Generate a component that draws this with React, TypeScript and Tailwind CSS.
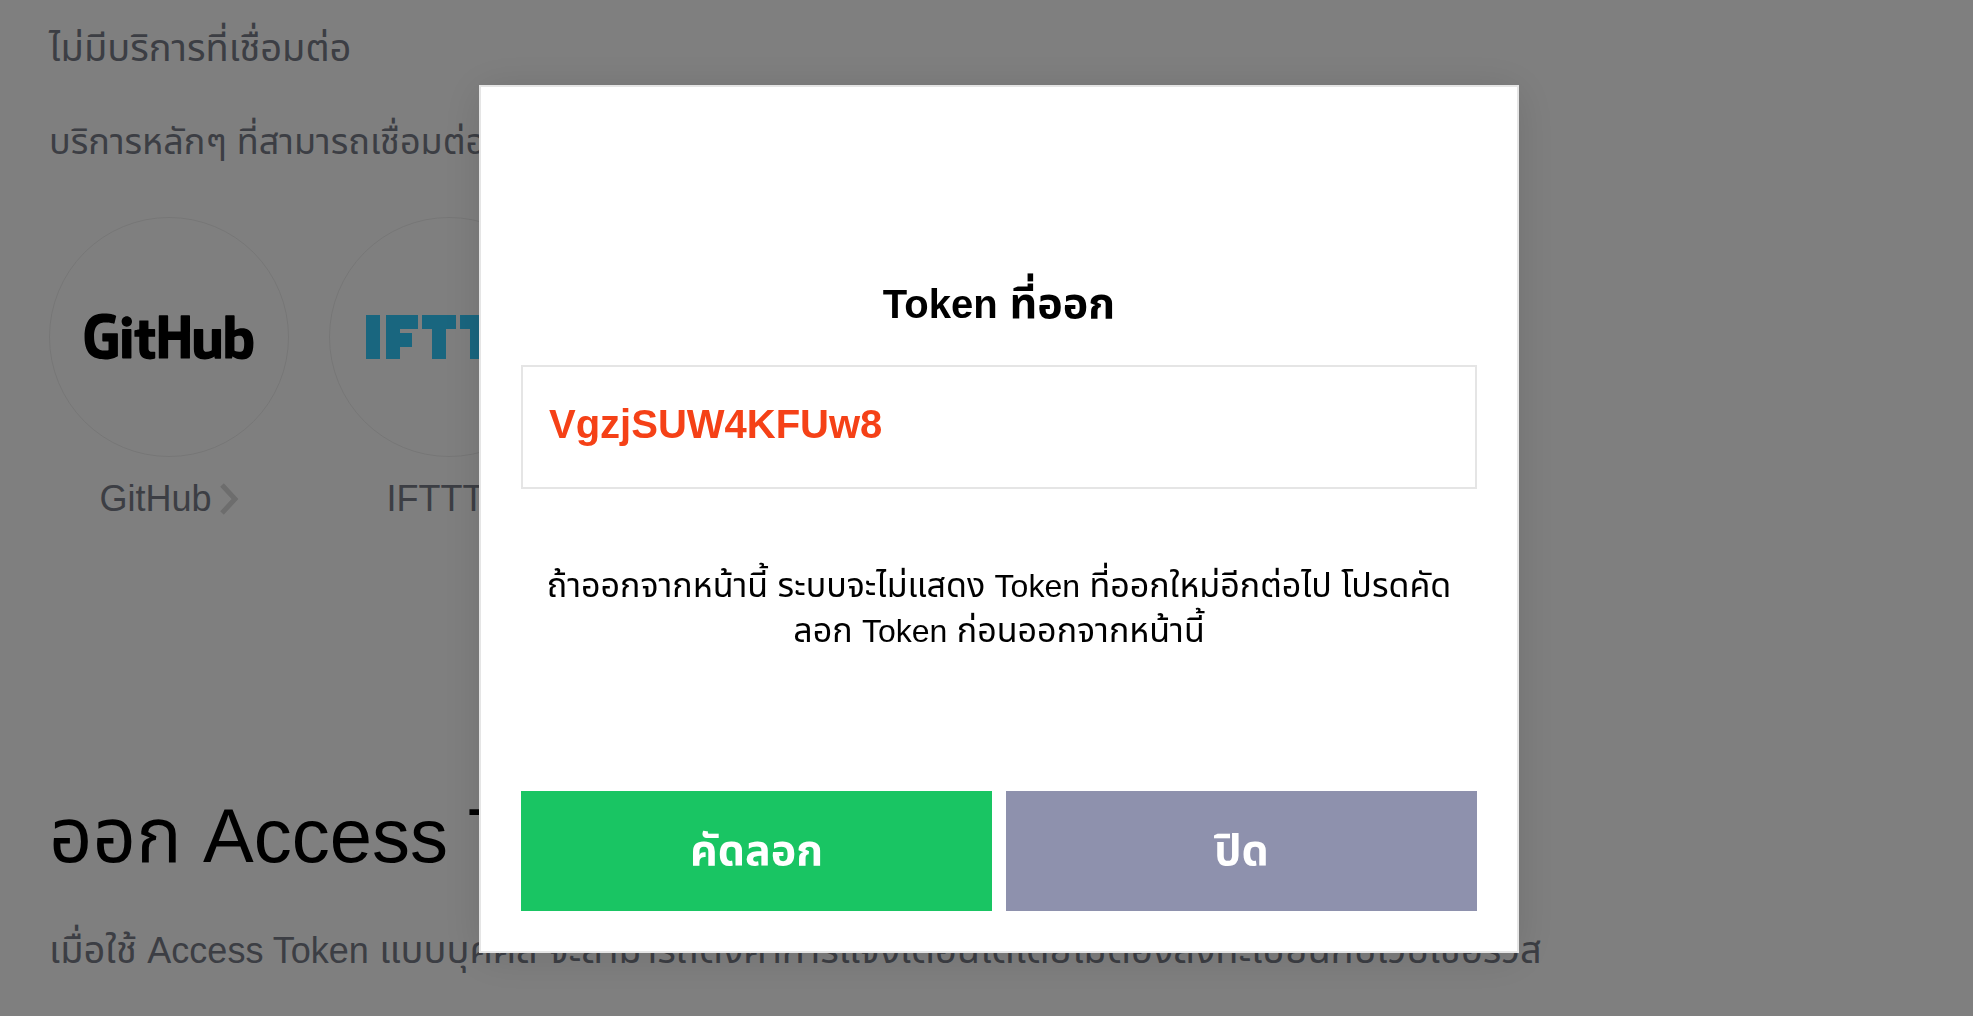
import React from "react";
import { DiGithubFull } from "react-icons/di";
import { SiIfttt } from "react-icons/si";

function Chevron() {
  return (
    <svg width="19" height="32" viewBox="0 0 19 32" fill="none" stroke="#dadada" strokeWidth="5" aria-hidden="true">
      <path d="M2 2l13 14L2 30" />
    </svg>
  );
}

function Service({ name, logo }: { name: string; logo: React.ReactNode }) {
  return (
    <li className="flex w-60 flex-col items-center">
      <div className="flex size-60 items-center justify-center overflow-hidden rounded-full border border-[#ededed]">{logo}</div>
      <a href="#" className="mt-[18px] flex items-center gap-2 text-4xl leading-[48px]">
        {name}
        <Chevron />
      </a>
    </li>
  );
}

export default function App() {
  return (
    <div className="min-h-screen overflow-hidden bg-white font-['Liberation_Sans','Noto_Sans_Thai',Tahoma,sans-serif] text-[38px] text-[#787c88]">
      <main className="px-[49px] pt-6">
        <p className="leading-[48px]">ไม่มีบริการที่เชื่อมต่อ</p>
        <p className="mt-[46px] text-4xl leading-[48px]">บริการหลักๆ ที่สามารถเชื่อมต่อ</p>
        <ul className="mt-[51px] flex gap-10">
          <Service name="GitHub" logo={<DiGithubFull className="mb-1 size-[172px] text-black" />} />
          <Service name="IFTTT" logo={<SiIfttt className="size-[166px] text-[#33ccff]" />} />
        </ul>
        <h2 className="mt-[267px] text-[76px] leading-[92px] text-black">ออก Access Token</h2>
        <p className="mt-11 leading-[48px] whitespace-nowrap">
          เมื่อใช้ <span className="text-4xl leading-[48px]">Access Token</span> แบบบุคคล จะสามารถตั้งค่าการแจ้งเตือนได้โดยไม่ต้องลงทะเบียนกับเว็บเซอร์วิส
        </p>
      </main>

      <div className="fixed inset-0 flex items-center justify-center bg-black/50 pt-[21px] pl-[25px]">
        <section
          role="dialog"
          aria-modal="true"
          aria-labelledby="token-title"
          className="w-[1040px] border-2 border-[#e5e5e5] bg-white p-10 pt-[190px] text-center text-black shadow-[0_4px_40px_rgba(0,0,0,0.12)]"
        >
          <h1 id="token-title" className="text-[43px] leading-[52px] font-bold">
            <span className="text-[40px] leading-[52px]">Token</span> ที่ออก
          </h1>
          <input
            readOnly
            aria-labelledby="token-title"
            defaultValue="VgzjSUW4KFUw8"
            className="mt-[35px] h-[124px] w-full border-2 border-[#e5e5e5] px-[26px] pb-1 text-[40px] font-bold text-[#f54117] outline-none"
          />
          <p className="mt-[74px] px-4 text-[34px] leading-[44px]">
            ถ้าออกจากหน้านี้ ระบบจะไม่แสดง <span className="text-[32px] leading-[44px]">Token</span> ที่ออกใหม่อีกต่อไป โปรดคัด
            <wbr />
            ลอก <span className="text-[32px] leading-[44px]">Token</span> ก่อนออกจากหน้านี้
          </p>
          <div className="mt-[138px] grid grid-cols-2 gap-[14px] text-[43px] font-bold text-white">
            <button className="h-[120px] bg-[#19c563]">คัดลอก</button>
            <button className="h-[120px] bg-[#8e91ad]">ปิด</button>
          </div>
        </section>
      </div>
    </div>
  );
}
